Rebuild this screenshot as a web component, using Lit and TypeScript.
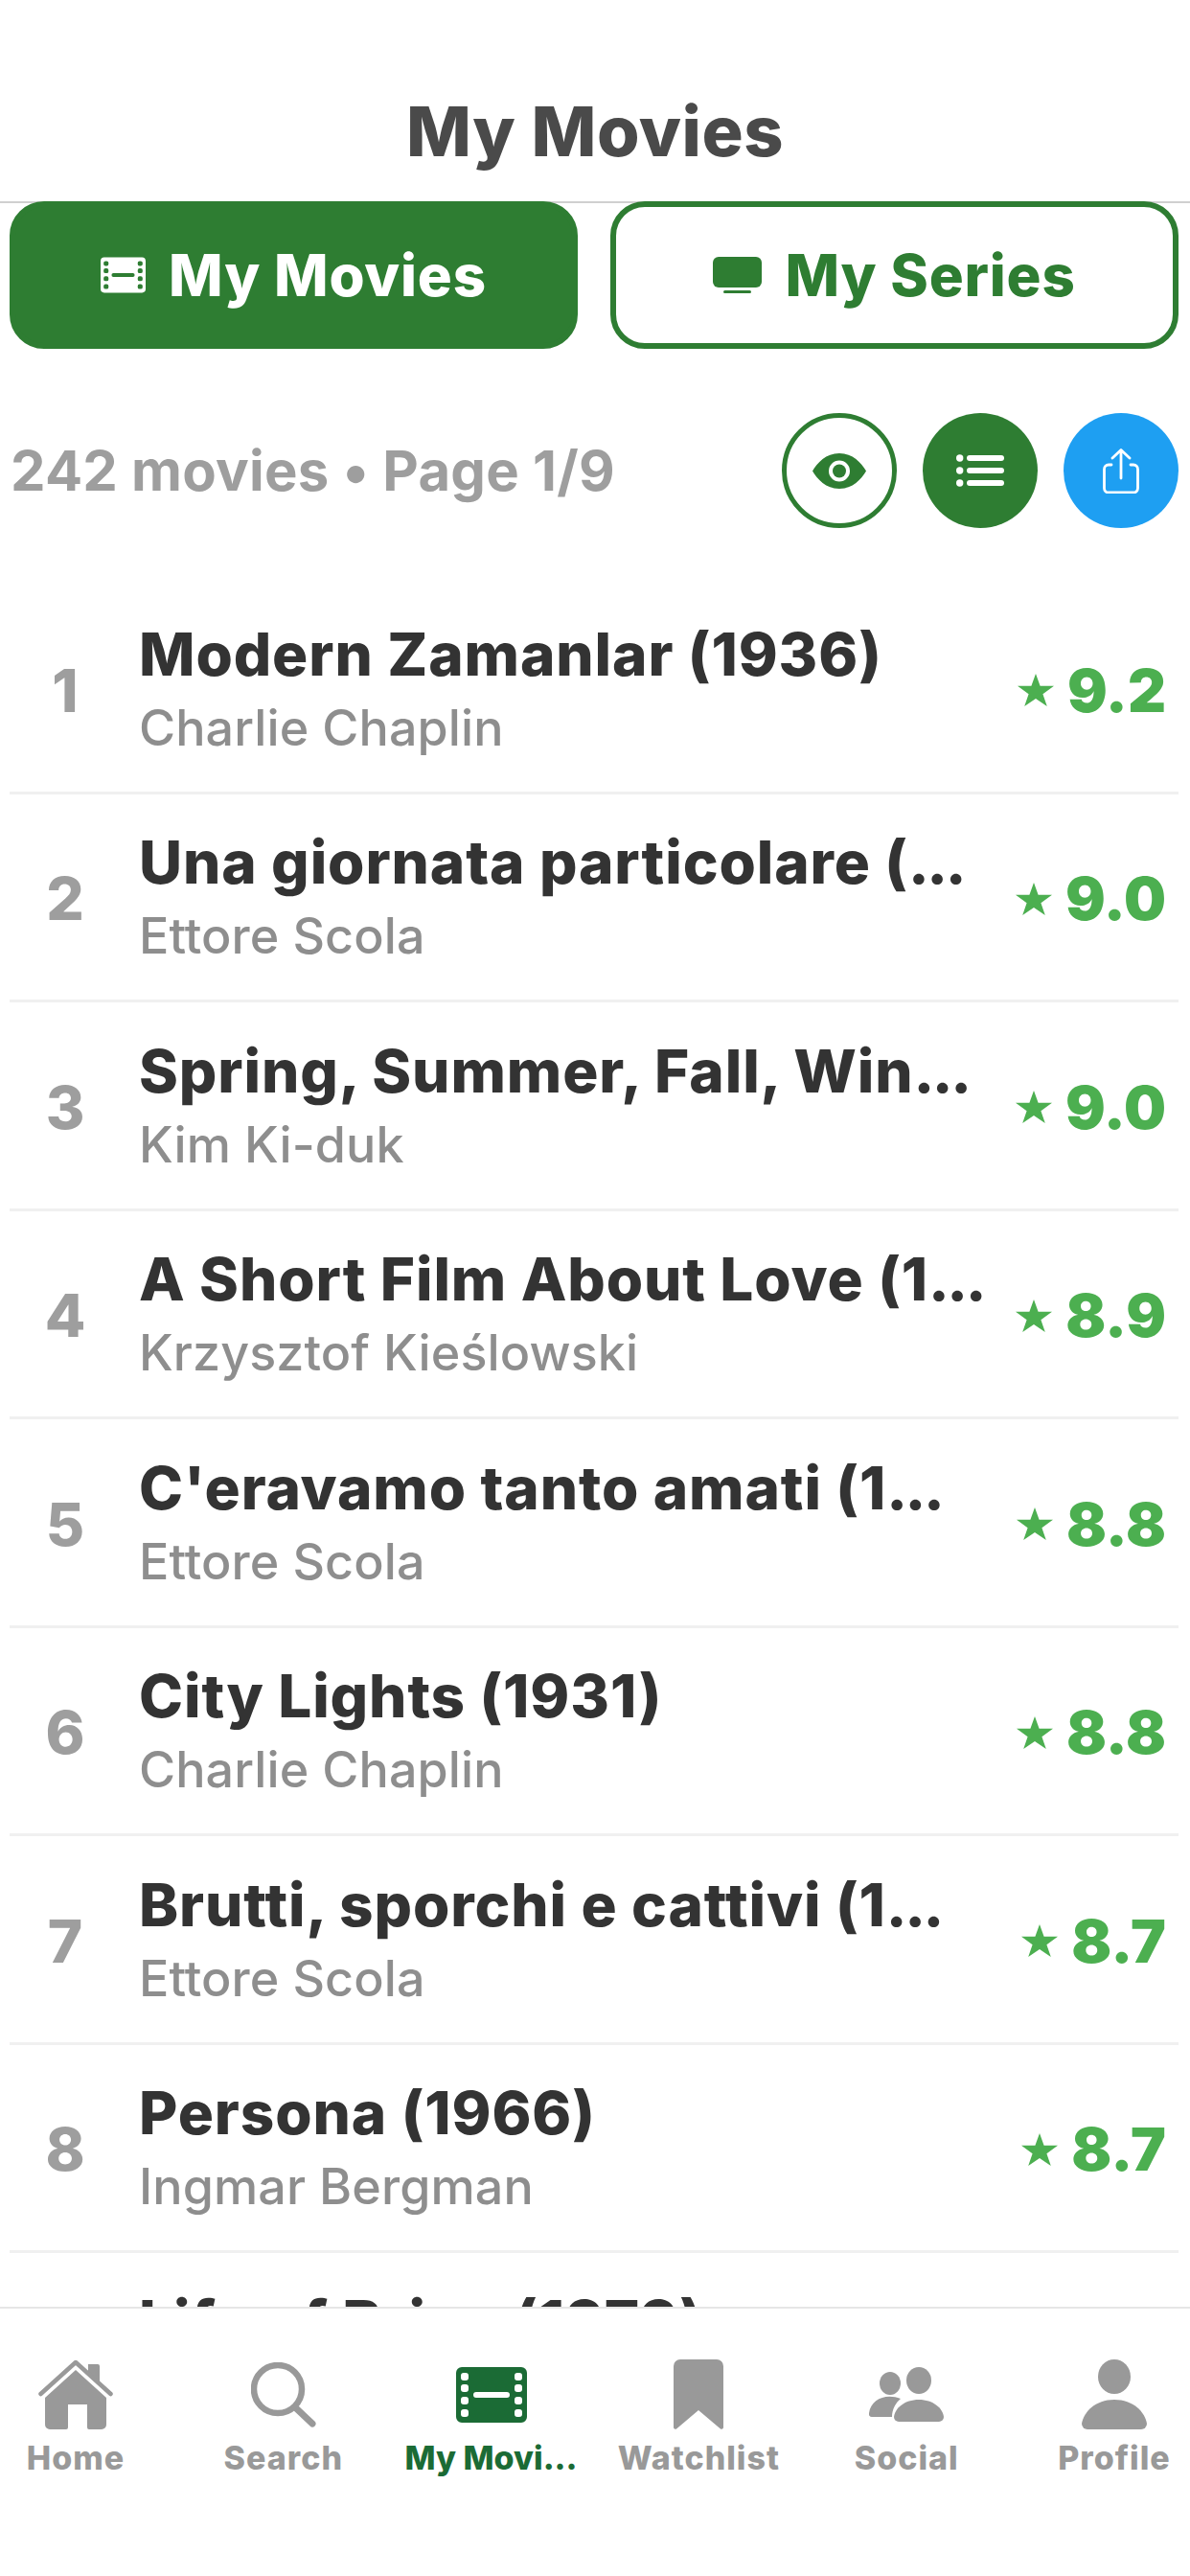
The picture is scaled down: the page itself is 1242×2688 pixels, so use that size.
import { LitElement, html, css, svg } from "lit";
import { customElement } from "lit/decorators.js";

const movies = [
  ["Modern Zamanlar (1936)", "Charlie Chaplin", "9.2"],
  ["Una giornata particolare (...", "Ettore Scola", "9.0"],
  ["Spring, Summer, Fall, Win...", "Kim Ki-duk", "9.0"],
  ["A Short Film About Love (1...", "Krzysztof Kieślowski", "8.9"],
  ["C'eravamo tanto amati (1...", "Ettore Scola", "8.8"],
  ["City Lights (1931)", "Charlie Chaplin", "8.8"],
  ["Brutti, sporchi e cattivi (1...", "Ettore Scola", "8.7"],
  ["Persona (1966)", "Ingmar Bergman", "8.7"],
  ["Life of Brian (1979)", "", ""],
];

const rr = (x: number, y: number, w: number, h: number, r: number) =>
  `M${x + r} ${y}h${w - 2 * r}a${r} ${r} 0 0 1 ${r} ${r}v${h - 2 * r}a${r} ${r} 0 0 1 -${r} ${r}h-${w - 2 * r}a${r} ${r} 0 0 1 -${r} -${r}v-${h - 2 * r}a${r} ${r} 0 0 1 ${r} -${r}Z`;

const filmPath =
  rr(0, 0, 74, 58, 6) +
  [6, 18, 31, 44].map((y) => rr(5, y, 8, 8, 3) + rr(61, y, 8, 8, 3)).join("") +
  rr(18, 26, 38, 6, 3);

const film = () => svg`<path fill-rule="evenodd" fill="currentColor" d=${filmPath}/>`;

const tabs = [
  ["Home", svg`<svg width="78" height="73" viewBox="0 0 78 73"><path fill="currentColor" d="M52 5h10a2 2 0 0 1 2 2v19L52 15Z"/><path fill="none" stroke="currentColor" stroke-width="4.500" stroke-linecap="round" stroke-linejoin="round" d="M2.500 36 39 3l36.500 33"/><path fill="currentColor" d="M39 11 71 40v28a5 5 0 0 1-5 5H53a2 2 0 0 1-2-2V47H31v24a2 2 0 0 1-2 2H12a5 5 0 0 1-5-5V40Z"/></svg>`],
  ["Search", svg`<svg width="68" height="68" viewBox="0 0 68 68"><circle cx="28" cy="28" r="25" fill="none" stroke="currentColor" stroke-width="6.500"/><path d="M46 47 64 64" stroke="currentColor" stroke-width="7" stroke-linecap="round"/></svg>`],
  ["My Movi...", svg`<svg width="74" height="58" viewBox="0 0 74 58">${film()}</svg>`],
  ["Watchlist", svg`<svg width="52" height="73" viewBox="0 0 52 73"><path fill="currentColor" d="M7 0h38a7 7 0 0 1 7 7v64a2 2 0 0 1-3 1.500L26 53 3 72.500A2 2 0 0 1 0 71V7a7 7 0 0 1 7-7Z"/></svg>`],
  ["Social", svg`<svg width="78" height="57" viewBox="0 0 78 57"><ellipse cx="22" cy="17" rx="11" ry="12" fill="currentColor"/><ellipse cx="52" cy="14" rx="13" ry="14" fill="currentColor"/><path fill="currentColor" d="M33 33C18 27 2 33 0 48a3 3 0 0 0 3 4h21C24 44 28 37 33 33Z"/><path fill="currentColor" d="M52 34c15 0 25 9 26 18a5 5 0 0 1-5 5H31a5 5 0 0 1-5-5c1-9 11-18 26-18Z"/></svg>`],
  ["Profile", svg`<svg width="68" height="73" viewBox="0 0 68 73"><ellipse cx="34" cy="18" rx="17" ry="18" fill="currentColor"/><path fill="currentColor" d="M34 42c20 0 32 13 34 25a6 6 0 0 1-6 6H6a6 6 0 0 1-6-6c2-12 14-25 34-25Z"/></svg>`],
] as const;

const titleText = (t: string) =>
  t.endsWith("...")
    ? html`${t.slice(0, -3)}<span class="dots">...</span>`
    : t;

@customElement("app-root")
export class AppRoot extends LitElement {
  static styles = css`
    :host {
      display: flex;
      flex-direction: column;
      width: 1242px;
      height: 2688px;
      background: #fff;
      overflow: hidden;
      font-family: Inter, "Liberation Sans", sans-serif;
    }
    .header {
      flex: none;
      height: 212px;
      box-sizing: border-box;
      border-bottom: 2px solid #d0d0d0;
      display: flex;
      justify-content: center;
      font-size: 72px;
      font-weight: 800;
      letter-spacing: 0.500px;
      line-height: 87px;
      padding-top: 93px;
      color: #4a4a4a;
    }
    .switch {
      flex: none;
      display: flex;
      gap: 34px;
      padding: 0 12px 0 10px;
      margin-top: -2px;
      height: 154px;
      position: relative;
    }
    .switch-btn {
      flex: 1;
      box-sizing: border-box;
      border: 6px solid #2e7d32;
      border-radius: 36px;
      display: flex;
      align-items: center;
      justify-content: center;
      gap: 24px;
      font-size: 60px;
      font-weight: 800;
      letter-spacing: 0.800px;
      color: #2e7d32;
      background: #fff;
    }
    .switch-btn.on {
      background: #2e7d32;
      color: #fff;
    }
    .stats {
      flex: none;
      display: flex;
      align-items: center;
      justify-content: space-between;
      padding: 0 12px 0 11px;
      margin-top: 67px;
      height: 120px;
    }
    .count {
      font-size: 58px;
      font-weight: 700;
      letter-spacing: 0.250px;
      color: #9e9e9e;
    }
    .actions {
      display: flex;
      gap: 27px;
    }
    .circle {
      width: 120px;
      height: 120px;
      box-sizing: border-box;
      border-radius: 50%;
      display: flex;
      align-items: center;
      justify-content: center;
    }
    .circle.outline {
      border: 5px solid #2e7d32;
      color: #2e7d32;
    }
    .circle.fill {
      background: #2e7d32;
      color: #fff;
    }
    .circle.share {
      background: #1e9ff2;
      color: #fff;
    }
    .list {
      flex: 1;
      min-height: 0;
      overflow: hidden;
      padding: 60px 12px 0 10px;
    }
    .row {
      height: 217.500px;
      box-sizing: border-box;
      border-bottom: 3px solid #f0f0f0;
      display: flex;
      align-items: center;
    }
    .num {
      flex: none;
      width: 116px;
      padding-top: 4px;
      text-align: center;
      font-size: 62px;
      font-weight: 800;
      color: #9e9e9e;
    }
    .info {
      flex: 1;
      min-width: 0;
      padding-left: 19px;
    }
    .title {
      font-size: 62px;
      font-weight: 800;
      line-height: 73px;
      letter-spacing: 0.900px;
      color: #333;
      white-space: nowrap;
    }
    .dots {
      letter-spacing: -2.500px;
    }
    .sub {
      font-size: 52px;
      line-height: 62px;
      min-height: 62px;
      margin-top: 10px;
      font-weight: 500;
      letter-spacing: 0.100px;
      color: #8e8e8e;
      white-space: nowrap;
    }
    .rate {
      flex: none;
      display: flex;
      align-items: center;
      gap: 14px;
      padding: 4px 13px 0 0;
      font-size: 62px;
      font-weight: 900;
      color: #4caf50;
    }
    .tabbar {
      flex: none;
      height: 281px;
      box-sizing: border-box;
      border-top: 2px solid #e6e6e6;
      background: #fff;
      display: flex;
      justify-content: space-between;
      padding: 53px 6px 0 6px;
    }
    .tab {
      width: 146px;
      display: flex;
      flex-direction: column;
      align-items: center;
      color: #999;
      font-size: 34px;
      font-weight: 800;
      letter-spacing: 1px;
      white-space: nowrap;
    }
    .tab.active {
      color: #1b6b35;
      letter-spacing: 0;
    }
    .icon {
      height: 73px;
      display: flex;
      align-items: center;
      justify-content: center;
    }
    .label {
      margin-top: 10px;
      line-height: 40px;
    }
  `;

  render() {
    return html`
      <div class="header">My Movies</div>
      <div class="switch">
        <div class="switch-btn on">
          <svg width="47" height="38" viewBox="0 0 74 58">${film()}</svg>
          My Movies
        </div>
        <div class="switch-btn">
          <svg width="51" height="38" viewBox="0 0 51 38">
            <path fill="currentColor" d="M6 0h39a6 6 0 0 1 6 6v20a6 6 0 0 1-6 6H6a6 6 0 0 1-6-6V6a6 6 0 0 1 6-6Z"/>
            <rect x="11" y="35" width="29" height="3" rx="1.500" fill="currentColor"/>
          </svg>
          My Series
        </div>
      </div>
      <div class="stats">
        <div class="count">242 movies • Page 1/9</div>
        <div class="actions">
          <div class="circle outline">
            <svg width="56" height="37" viewBox="0 0 56 37">
              <path fill="currentColor" fill-rule="evenodd" d="M28 0C42 0 51 10 56 18.500 51 27 42 37 28 37S5 27 0 18.500C5 10 14 0 28 0Zm0 7.500a11 11 0 1 0 0 22 11 11 0 0 0 0-22Z"/>
              <circle cx="28" cy="18.500" r="7" fill="currentColor"/>
            </svg>
          </div>
          <div class="circle fill">
            <svg width="50" height="34" viewBox="0 0 50 34" fill="currentColor">
              <circle cx="3.700" cy="4" r="3.700"/><circle cx="3.700" cy="17" r="3.700"/><circle cx="3.700" cy="30" r="3.700"/>
              <rect x="11" y="1" width="39" height="6" rx="3"/><rect x="11" y="14" width="39" height="6" rx="3"/><rect x="11" y="27" width="39" height="6" rx="3"/>
            </svg>
          </div>
          <div class="circle share">
            <svg width="38" height="47" viewBox="0 0 38 47" fill="none" stroke="currentColor" stroke-width="2.800" stroke-linecap="round" stroke-linejoin="round">
              <path d="M19 31V2M10 10l9-8.500 9 8.500"/>
              <path d="M9 17H6a4.500 4.500 0 0 0-4.500 4.500v20A4.500 4.500 0 0 0 6 46h26a4.500 4.500 0 0 0 4.500-4.500v-20A4.500 4.500 0 0 0 32 17h-3"/>
            </svg>
          </div>
        </div>
      </div>
      <div class="list">
        ${movies.map(
          (m, i) => html`
            <div class="row">
              <div class="num">${m[2] ? i + 1 : ""}</div>
              <div class="info">
                <div class="title">${titleText(m[0])}</div>
                <div class="sub">${m[1]}</div>
              </div>
              ${m[2]
                ? html`<div class="rate">
                    <svg width="38" height="34" viewBox="0 0 38 34"><path fill="currentColor" d="M19 0l4.600 12.800H38l-11.600 8.400L30.800 34 19 26 7.200 34l4.400-12.800L0 12.800h14.400Z"/></svg>
                    <span>${m[2]}</span>
                  </div>`
                : ""}
            </div>
          `
        )}
      </div>
      <div class="tabbar">
        ${tabs.map(
          (t) => html`
            <div class="tab ${t[0].startsWith("My") ? "active" : ""}">
              <div class="icon">${t[1]}</div>
              <div class="label">${t[0]}</div>
            </div>
          `
        )}
      </div>
    `;
  }
}
